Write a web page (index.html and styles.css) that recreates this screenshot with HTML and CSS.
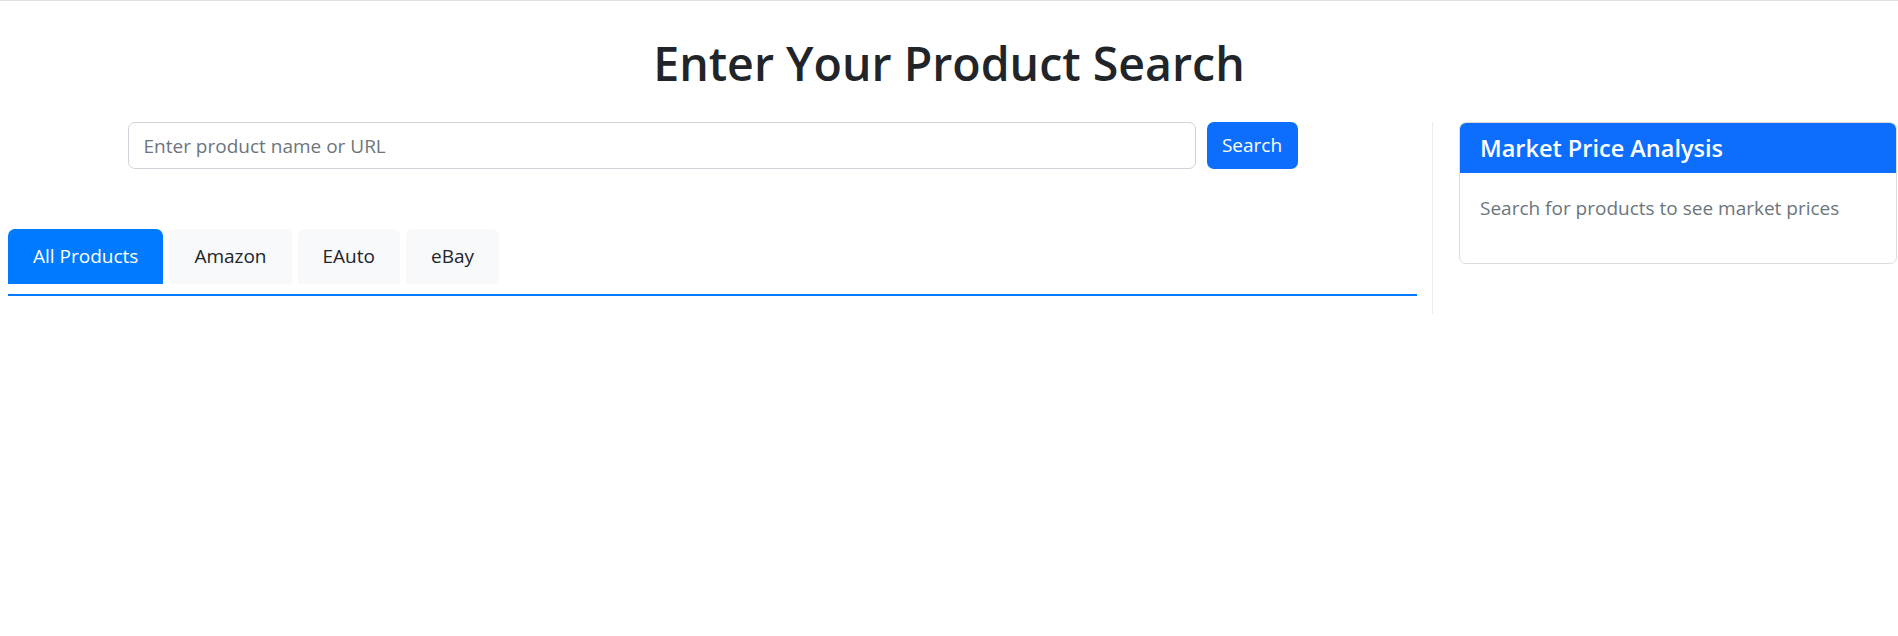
FILE: index.html
```html
<!DOCTYPE html>
<html lang="en">
<head>
<meta charset="utf-8">
<title>Product Search</title>
<link rel="stylesheet" href="styles.css">
</head>
<body>
<div class="page">
  <h1 class="title">Enter Your Product Search</h1>
  <div class="layout">
    <main class="main">
      <form class="search" onsubmit="return false">
        <input class="search-input" type="text" placeholder="Enter product name or URL">
        <button class="search-btn" type="submit">Search</button>
      </form>
      <nav class="tabs">
        <a class="tab tab-active" href="#">All Products</a>
        <a class="tab" href="#">Amazon</a>
        <a class="tab" href="#">EAuto</a>
        <a class="tab" href="#">eBay</a>
      </nav>
    </main>
    <aside class="side">
      <div class="card">
        <div class="card-header"><h5 class="card-title">Market Price Analysis</h5></div>
        <div class="card-body"><p class="card-text">Search for products to see market prices</p></div>
      </div>
    </aside>
  </div>
</div>
</body>
</html>
```
FILE: styles.css
```css
* { box-sizing: border-box; }
html, body { margin: 0; padding: 0; background: #fff; }
body {
  font-family: "Open Sans", "Noto Sans", sans-serif;
  color: #212529;
  font-size: 19px;
  line-height: 1.5;
  border-top: 1px solid #dfe3dc;
}
.page { display: flex; flex-direction: column; }
.title {
  margin: 32px 0 29px;
  text-align: center;
  font-size: 46.5px;
  font-weight: 600;
  line-height: 60px;
  color: #212529;
}
.layout { display: flex; align-items: stretch; }
.main {
  width: 1433px;
  padding: 0 15px 18px 8px;
  border-right: 1px solid #e9ecef;
  display: flex;
  flex-direction: column;
}
.search {
  align-self: center;
  width: 1170px;
  display: flex;
  gap: 11px;
  margin: 0 0 60px;
}
.search-input {
  flex: 1;
  height: 47px;
  border: 1px solid #ced4da;
  border-radius: 7px;
  padding: 0 15px;
  font: inherit;
  font-size: 19px;
  color: #212529;
}
.search-input::placeholder { color: #6c757d; }
.search-btn {
  width: 91px;
  height: 47px;
  border: 0;
  border-radius: 7px;
  background: #0d6efd;
  color: #fff;
  font: inherit;
  font-size: 19px;
}
.tabs {
  display: flex;
  gap: 6px;
  padding-bottom: 10px;
  border-bottom: 2px solid #007bff;
}
.tab {
  display: block;
  height: 55px;
  padding: 0 25px;
  line-height: 55px;
  border-radius: 7px 7px 0 0;
  background: #f8f9fa;
  color: #212529;
  text-decoration: none;
  font-size: 19px;
}
.tab-active { background: #007bff; color: #fff; }
.side { flex: 1; padding: 0 1px 0 26px; }
.card {
  border: 1px solid #dcdcdc;
  border-radius: 7px;
  overflow: hidden;
}
.card-header {
  background: #0d6efd;
  padding: 10px 20px;
}
.card-title {
  margin: 0;
  color: #fff;
  font-size: 23.5px;
  font-weight: 600;
  line-height: 30px;
}
.card-body { padding: 20px; }
.card-text { margin: 0 0 20px; color: #6c757d; font-size: 19px; line-height: 30px; }
```
